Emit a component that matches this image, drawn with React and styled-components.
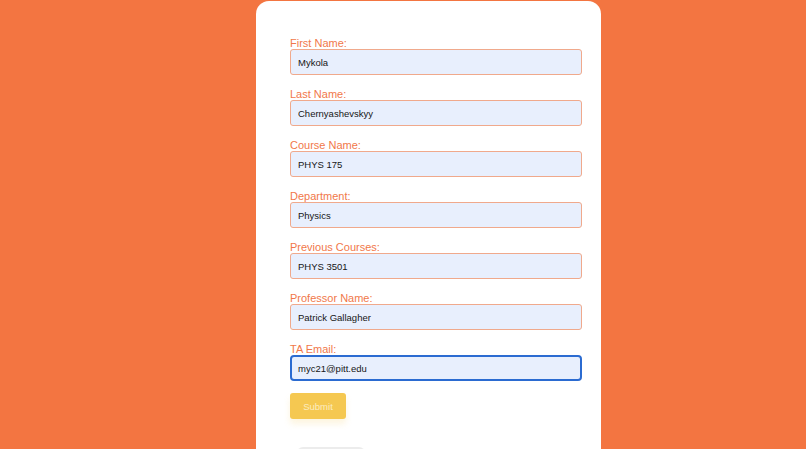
import React from "react";
import styled, { createGlobalStyle } from "styled-components";

const Global = createGlobalStyle`
  html, body { margin: 0; padding: 0; background: #f37541; overflow: hidden; }
  body { font-family: "Liberation Sans", Arial, sans-serif; }
`;

const Page = styled.div`
  min-height: 449px;
  padding: 1px 0 0 256px;
  box-sizing: border-box;
  background: #f37541;
`;

const Card = styled.form`
  width: 345px;
  min-height: 470px;
  box-sizing: border-box;
  background: #ffffff;
  border-radius: 13px;
  padding: 36px 20px 0 34px;
  display: flex;
  flex-direction: column;
`;

const Field = styled.div`
  display: flex;
  flex-direction: column;
  margin-bottom: 13px;
`;

const Label = styled.label`
  font-size: 11px;
  line-height: 12px;
  color: #f1784a;
`;

const Input = styled.input`
  box-sizing: border-box;
  width: 292px;
  height: 26px;
  margin: 0;
  padding: 0 0 0 ${(p) => (p.$focused ? 6 : 7)}px;
  font-family: "Liberation Sans", Arial, sans-serif;
  font-size: 9.5px;
  color: #161616;
  background: #e8effd;
  border: ${(p) => (p.$focused ? "2px solid #2b6bd1" : "1px solid #f0a98c")};
  border-radius: ${(p) => (p.$focused ? 4 : 3)}px;
  outline: none;
`;

const Submit = styled.button`
  margin-top: -1px;
  width: 56px;
  height: 26px;
  border: none;
  border-radius: 3px;
  background: #f5c851;
  color: #fcecc0;
  font-family: "Liberation Sans", Arial, sans-serif;
  font-size: 9.5px;
  padding: 0;
  box-shadow: 0 5px 6px rgba(245, 200, 81, 0.18);
`;

const Ghost = styled.div`
  margin: 28px 0 0 7px;
  width: 68px;
  height: 20px;
  border-radius: 6px;
  background: #ececec;
`;

const fields = [
  ["First Name:", "Mykola"],
  ["Last Name:", "Chernyashevskyy"],
  ["Course Name:", "PHYS 175"],
  ["Department:", "Physics"],
  ["Previous Courses:", "PHYS 3501"],
  ["Professor Name:", "Patrick Gallagher"],
  ["TA Email:", "myc21@pitt.edu"],
];

export default function App() {
  return (
    <>
      <Global />
      <Page>
        <Card onSubmit={(e) => e.preventDefault()}>
          {fields.map(([label, value], i) => (
            <Field key={label}>
              <Label>{label}</Label>
              <Input
                defaultValue={value}
                $focused={i === fields.length - 1}
                readOnly
              />
            </Field>
          ))}
          <Submit type="submit">Submit</Submit>
          <Ghost />
        </Card>
      </Page>
    </>
  );
}
